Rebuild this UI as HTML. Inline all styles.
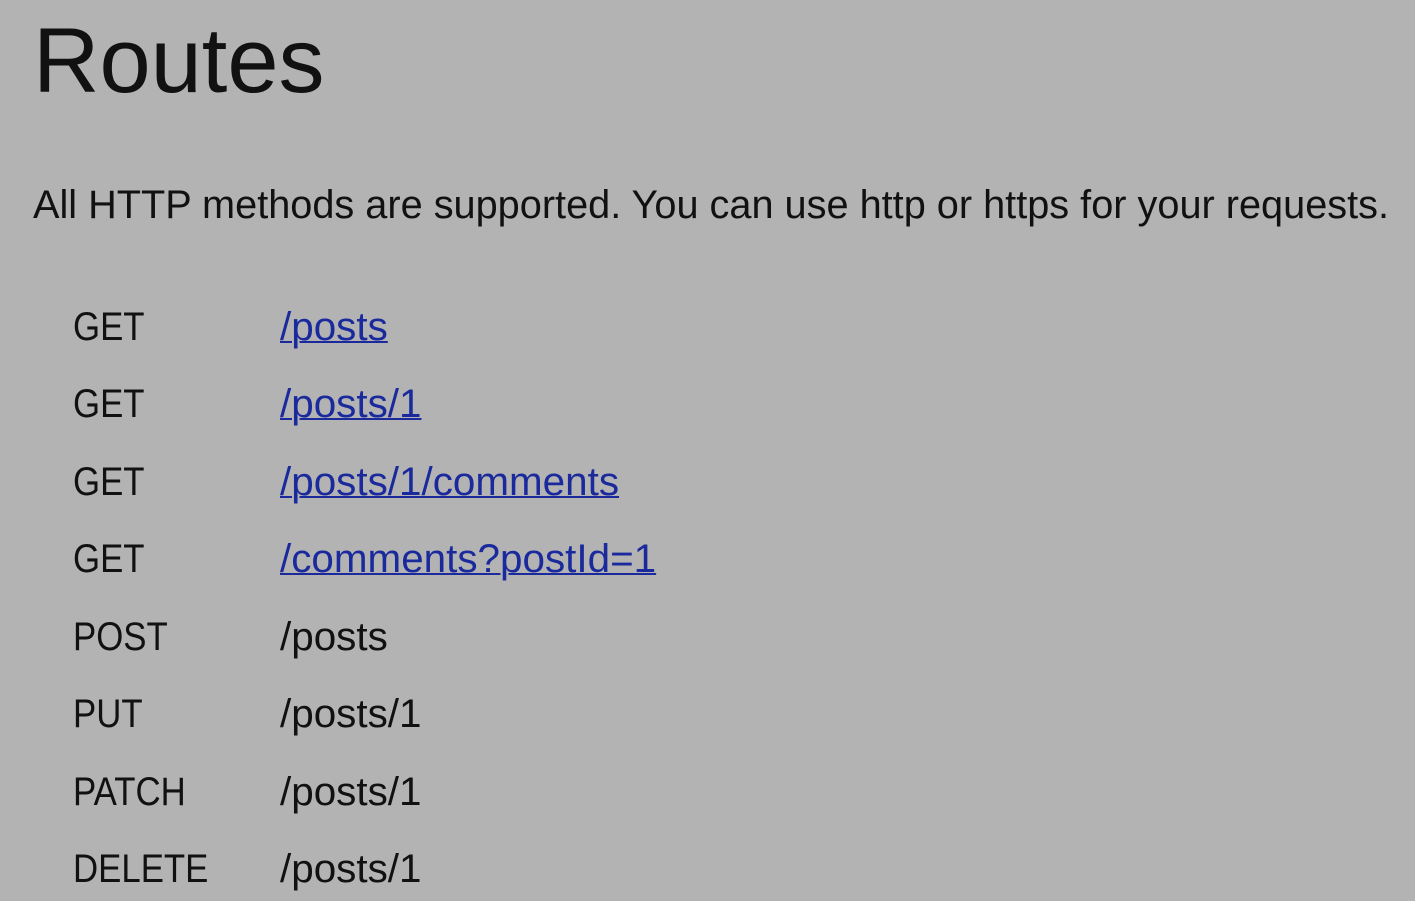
<!DOCTYPE html>
<html><head><meta charset="utf-8"><style>
html,body{margin:0;padding:0;background:#b3b3b3;width:1415px;height:901px;overflow:hidden;font-family:"Liberation Sans",sans-serif;color:#111}
.a{position:absolute;white-space:nowrap}
.t{font-size:92px;line-height:92px;left:33px;top:15px}
.p{font-size:39.7px;line-height:40px;left:33px;top:185px}
.r{font-size:40px;line-height:40px}
.m{left:73px;transform:scaleX(0.87);transform-origin:0 0}
.u{left:280px;transform:scaleX(1.01);transform-origin:0 0}
a{color:#1a2a9c;text-decoration:underline;text-decoration-thickness:2px}
</style></head><body>
<div class="a t">Routes</div>
<div class="a p">All HTTP methods are supported. You can use http or https for your requests.</div>
<div class="a r m" style="top:307px">GET</div><div class="a r u" style="top:307px"><a>/posts</a></div>
<div class="a r m" style="top:384px">GET</div><div class="a r u" style="top:384px"><a>/posts/1</a></div>
<div class="a r m" style="top:462px">GET</div><div class="a r u" style="top:462px"><a>/posts/1/comments</a></div>
<div class="a r m" style="top:539px">GET</div><div class="a r u" style="top:539px"><a>/comments?postId=1</a></div>
<div class="a r m" style="top:617px">POST</div><div class="a r u" style="top:617px">/posts</div>
<div class="a r m" style="top:694px">PUT</div><div class="a r u" style="top:694px">/posts/1</div>
<div class="a r m" style="top:772px">PATCH</div><div class="a r u" style="top:772px">/posts/1</div>
<div class="a r m" style="top:849px">DELETE</div><div class="a r u" style="top:849px">/posts/1</div>
</body></html>
